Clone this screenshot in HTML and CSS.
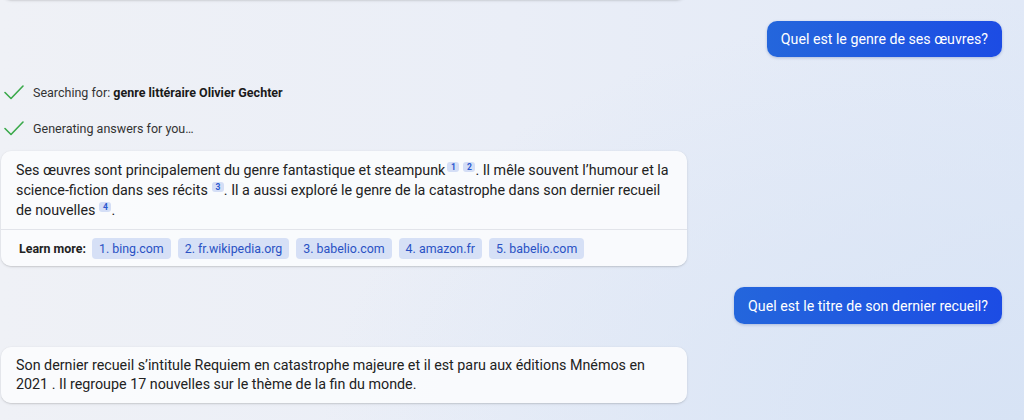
FILE: index.html
```html
<!DOCTYPE html>
<html lang="fr">
<head>
<meta charset="utf-8">
<link rel="stylesheet" href="styles.css">
</head>
<body>
<div class="chat">
  <div class="card card-prev"></div>

  <div class="user-row row-1">
    <div class="bubble">Quel est le genre de ses œuvres?</div>
  </div>

  <div class="status s1">
    <svg class="check" viewBox="0 0 20 16" width="20" height="16"><path d="M1 8.5 L7 14.5 L19 2" fill="none" stroke="#3aa94a" stroke-width="1.6" stroke-linecap="round" stroke-linejoin="round"/></svg>
    <span>Searching for: <b>genre littéraire Olivier Gechter</b></span>
  </div>
  <div class="status s2">
    <svg class="check" viewBox="0 0 20 16" width="20" height="16"><path d="M1 8.5 L7 14.5 L19 2" fill="none" stroke="#3aa94a" stroke-width="1.6" stroke-linecap="round" stroke-linejoin="round"/></svg>
    <span>Generating answers for you…</span>
  </div>

  <div class="card card-answer">
    <p class="answer">Ses œuvres sont principalement du genre fantastique et steampunk<sup class="ref">1</sup><sup class="ref">2</sup>. Il mêle souvent l’humour et la science-fiction dans ses récits<sup class="ref">3</sup>. Il a aussi exploré le genre de la catastrophe dans son dernier recueil de nouvelles<sup class="ref">4</sup>.</p>
    <div class="learn">
      <span class="learn-label">Learn more:</span>
      <span class="chip">1. bing.com</span>
      <span class="chip">2. fr.wikipedia.org</span>
      <span class="chip">3. babelio.com</span>
      <span class="chip">4. amazon.fr</span>
      <span class="chip">5. babelio.com</span>
    </div>
  </div>

  <div class="user-row row-2">
    <div class="bubble">Quel est le titre de son dernier recueil?</div>
  </div>

  <div class="card card-answer2">
    <p class="answer">Son dernier recueil s’intitule Requiem en catastrophe majeure et il est paru aux éditions Mnémos en 2021 . Il regroupe 17 nouvelles sur le thème de la fin du monde.</p>
  </div>
</div>
</body>
</html>
```

FILE: styles.css
```css
html, body {
  margin: 0;
  padding: 0;
  height: 420px;
  overflow: hidden;
}
body {
  font-family: Roboto, "Liberation Sans", sans-serif;
  color: #1f1f1f;
  background:
    radial-gradient(ellipse 700px 420px at 1024px 420px, #d7e3f5 0%, rgba(215,227,245,0) 100%),
    linear-gradient(90deg, #eff1f6 0%, #eaeef7 50%, #e1e9f7 100%);
}
.chat {
  display: flex;
  flex-direction: column;
  padding: 0 22px 0 1px;
}
.card {
  width: 686px;
  box-sizing: border-box;
  background: rgba(250, 251, 253, 0.95);
  border-radius: 10px;
  box-shadow: 0 0.5px 1px rgba(0,0,0,0.08), 0 1px 3px rgba(0,0,0,0.10);
}
.card-prev {
  height: 20px;
  margin-top: -20px;
}
.user-row {
  display: flex;
  justify-content: flex-end;
}
.row-1 { margin-top: 21px; }
.row-2 { margin-top: 21px; }
.bubble {
  height: 36px;
  box-sizing: border-box;
  padding: 0 14px;
  display: flex;
  align-items: center;
  color: #fff;
  font-size: 14.2px;
  border-radius: 10px;
  background: linear-gradient(90deg, #2466dc 0%, #1c4ce4 100%);
  box-shadow: 0 1px 3px rgba(20, 50, 140, 0.25);
}
.row-2 .bubble { height: 37px; }
.status {
  display: flex;
  align-items: center;
  gap: 9px;
  font-size: 12.5px;
  color: #333;
  height: 20px;
  padding-left: 3px;
}
.status b { color: #1a1a1a; font-weight: 700; }
.s1 { margin-top: 25px; }
.s2 { margin-top: 16px; }
.check { flex: none; }
.card-answer {
  margin-top: 13px;
}
.answer {
  margin: 0;
  padding: 9px 16px 9px 15px;
  font-size: 14.3px;
  line-height: 20px;
  color: #222;
}
.ref {
  display: inline-block;
  vertical-align: 5px;
  font-size: 8.5px;
  line-height: 10px;
  min-width: 10px;
  text-align: center;
  padding: 0 1px;
  margin-left: 2px;
  border-radius: 3px;
  background: #d4def6;
  color: #2a58cf;
  font-weight: 700;
}
.ref + .ref { margin-left: 4px; }
.learn {
  border-top: 1px solid #e2e4ea;
  display: flex;
  align-items: center;
  gap: 7px;
  padding: 8px 16px 7px 18px;
  font-size: 12.4px;
}
.learn-label {
  font-weight: 700;
  color: #222;
  margin-right: -1px;
}
.chip {
  height: 21px;
  display: flex;
  align-items: center;
  padding: 0 7px;
  border-radius: 4px;
  background: #d6e0f6;
  color: #2a52c4;
}
.card-answer2 {
  margin-top: 23px;
}
.card-answer2 .answer {
  padding: 9px 16px 9px 15px;
  line-height: 19px;
}
```
